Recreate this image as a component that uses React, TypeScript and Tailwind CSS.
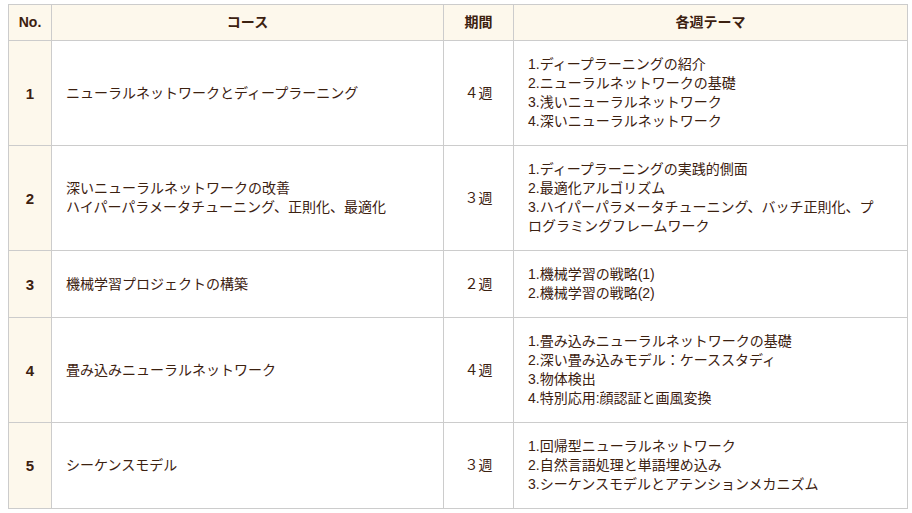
const rows = [
  {
    no: "1",
    course: ["ニューラルネットワークとディープラーニング"],
    period: "４週",
    themes: [
      "1.ディープラーニングの紹介",
      "2.ニューラルネットワークの基礎",
      "3.浅いニューラルネットワーク",
      "4.深いニューラルネットワーク",
    ],
  },
  {
    no: "2",
    course: ["深いニューラルネットワークの改善", "ハイパーパラメータチューニング、正則化、最適化"],
    period: "３週",
    themes: [
      "1.ディープラーニングの実践的側面",
      "2.最適化アルゴリズム",
      "3.ハイパーパラメータチューニング、バッチ正則化、プ",
      "ログラミングフレームワーク",
    ],
  },
  {
    no: "3",
    course: ["機械学習プロジェクトの構築"],
    period: "２週",
    themes: ["1.機械学習の戦略(1)", "2.機械学習の戦略(2)"],
  },
  {
    no: "4",
    course: ["畳み込みニューラルネットワーク"],
    period: "４週",
    themes: [
      "1.畳み込みニューラルネットワークの基礎",
      "2.深い畳み込みモデル：ケーススタディ",
      "3.物体検出",
      "4.特別応用:顔認証と画風変換",
    ],
  },
  {
    no: "5",
    course: ["シーケンスモデル"],
    period: "３週",
    themes: [
      "1.回帰型ニューラルネットワーク",
      "2.自然言語処理と単語埋め込み",
      "3.シーケンスモデルとアテンションメカニズム",
    ],
  },
];

const Lines = ({ items }: { items: string[] }) => (
  <>
    {items.map((t, i) => (
      <div key={i} className="whitespace-nowrap">{t}</div>
    ))}
  </>
);

export default function App() {
  return (
    <div className="bg-white w-[912px] h-[513px] pt-1 pl-2 font-['Liberation_Sans','Noto_Sans_CJK_JP',sans-serif] text-[#3c2110] text-[14px] leading-[19px]">
      <table className="border-collapse w-[899px] table-fixed">
        <colgroup>
          <col className="w-[43px]" />
          <col className="w-[392px]" />
          <col className="w-[70px]" />
          <col className="w-[394px]" />
        </colgroup>
        <thead>
          <tr className="h-[36px] bg-[#fdf8ec]">
            <th className="border border-[#cccccc] text-center font-bold">No.</th>
            <th className="border border-[#cccccc] text-center font-bold">コース</th>
            <th className="border border-[#cccccc] text-center font-bold">期間</th>
            <th className="border border-[#cccccc] text-center font-bold">各週テーマ</th>
          </tr>
        </thead>
        <tbody>
          {rows.map((r) => (
            <tr key={r.no}>
              <td className="border border-[#cccccc] bg-[#fdf8ec] text-center font-bold text-[15px]">{r.no}</td>
              <td className="border border-[#cccccc] px-[14px] py-[14px] align-middle">
                <Lines items={r.course} />
              </td>
              <td className="border border-[#cccccc] text-center">{r.period}</td>
              <td className="border border-[#cccccc] px-[14px] py-[14px] align-middle">
                <Lines items={r.themes} />
              </td>
            </tr>
          ))}
        </tbody>
      </table>
    </div>
  );
}
